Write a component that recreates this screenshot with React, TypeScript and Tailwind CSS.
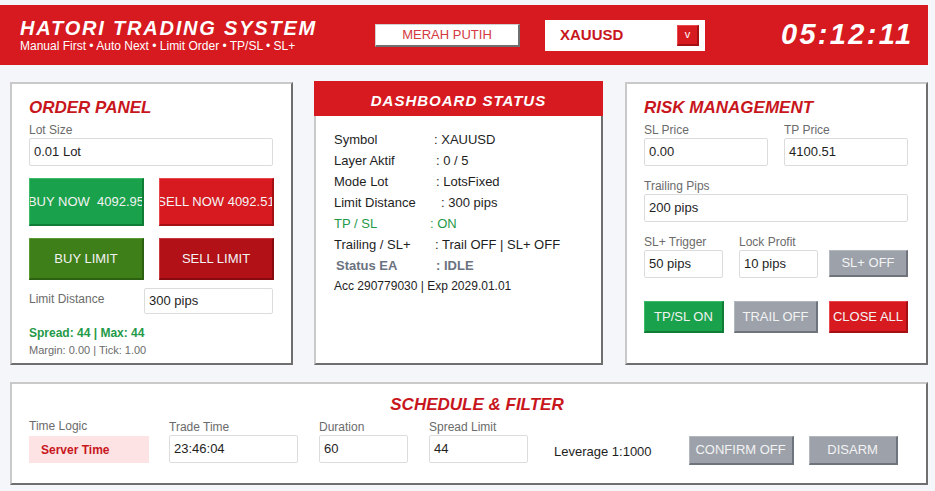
const FONT = { fontFamily: '"Liberation Sans", Arial, sans-serif' };

const panelCls =
  "border-2 border-t-[#c9c9c9] border-l-[#c9c9c9] border-r-[#6f6f6f] border-b-[#6f6f6f] bg-white";

function Field({ label, value, w }: { label: string; value: string; w: string }) {
  return (
    <div className={`flex flex-col ${w}`}>
      <span className="h-[14px] text-[12px] leading-[14px] text-[#6b6b6b]">{label}</span>
      <Input value={value} className="mt-px h-[28px] w-full" />
    </div>
  );
}

function Input({ value, className }: { value: string; className: string }) {
  return (
    <div
      className={`flex items-center rounded-[2px] border border-[#dcdcdc] bg-white pl-[4px] text-[13px] text-[#1e1e1e] ${className}`}
    >
      {value}
    </div>
  );
}

type Tone = "green" | "red" | "darkgreen" | "darkred" | "gray";

const tones: Record<Tone, string> = {
  green: "bg-[#19a24b] border-t-[#3dbb6a] border-l-[#3dbb6a] border-r-[#0f7d36] border-b-[#0f7d36] text-[#f2f2f2]",
  red: "bg-[#d71920] border-t-[#e8474d] border-l-[#e8474d] border-r-[#a51015] border-b-[#a51015] text-[#f4f4f4]",
  darkgreen: "bg-[#3f7f1a] border-t-[#5c9a35] border-l-[#5c9a35] border-r-[#2b6110] border-b-[#2b6110] text-[#f2f2f2]",
  darkred: "bg-[#b11117] border-t-[#c93a3f] border-l-[#c93a3f] border-r-[#870a0e] border-b-[#870a0e] text-[#f4f4f4]",
  gray: "bg-[#9ca1aa] border-t-[#b3b7be] border-l-[#b3b7be] border-r-[#6f747c] border-b-[#6f747c] text-[#f3f3f3]",
};

function Btn({ label, tone, className }: { label: string; tone: Tone; className: string }) {
  return (
    <button
      type="button"
      className={`flex items-center justify-center overflow-hidden whitespace-pre border-2 border-t-[1px] border-l-[1px] text-[13px] ${tones[tone]} ${className}`}
    >
      {label}
    </button>
  );
}

function Title({ children, className = "" }: { children: string; className?: string }) {
  return (
    <h2 className={`h-[20px] text-[17px] font-bold italic leading-[23px] text-[#c8161d] ${className}`}>{children}</h2>
  );
}

function OrderPanel() {
  return (
    <section className={`h-[283px] w-[283px] px-[17px] pt-[12px] ${panelCls}`}>
      <Title>ORDER PANEL</Title>
      <div className="mt-[7px] h-[14px] text-[12px] leading-[14px] text-[#6b6b6b]">Lot Size</div>
      <Input value="0.01 Lot" className="mt-px h-[28px] w-[244px]" />
      <div className="mt-[12px] flex gap-[15px]">
        <Btn label="BUY NOW  4092.95" tone="green" className="h-[48px] w-[115px]" />
        <Btn label="SELL NOW 4092.51" tone="red" className="h-[48px] w-[115px]" />
      </div>
      <div className="mt-[12px] flex gap-[15px]">
        <Btn label="BUY LIMIT" tone="darkgreen" className="h-[42px] w-[115px]" />
        <Btn label="SELL LIMIT" tone="darkred" className="h-[42px] w-[115px]" />
      </div>
      <div className="mt-[8px] flex">
        <span className="w-[115px] pt-[4px] text-[12px] leading-[14px] text-[#6b6b6b]">Limit Distance</span>
        <Input value="300 pips" className="h-[26px] w-[129px]" />
      </div>
      <div className="mt-[12px] h-[14px] text-[12px] font-bold leading-[14px] text-[#1f9a48]">Spread: 44 | Max: 44</div>
      <div className="mt-[4px] h-[13px] text-[11px] leading-[13px] text-[#6b6b6b]">Margin: 0.00 | Tick: 1.00</div>
    </section>
  );
}

const statusRows = [
  { k: "Symbol", v: "XAUUSD", w: "w-[100px]", c: "text-[#1e1e1e]" },
  { k: "Layer Aktif", v: "0 / 5", w: "w-[102px]", c: "text-[#1e1e1e]" },
  { k: "Mode Lot", v: "LotsFixed", w: "w-[102px]", c: "text-[#1e1e1e]" },
  { k: "Limit Distance", v: "300 pips", w: "w-[107px]", c: "text-[#1e1e1e]" },
  { k: "TP / SL", v: "ON", w: "w-[96px]", c: "text-[#1f9a48]" },
  { k: "Trailing / SL+", v: "Trail OFF | SL+ OFF", w: "w-[101px]", c: "text-[#1e1e1e]" },
];

function DashboardPanel() {
  return (
    <section className="flex h-[284px] w-[289px] -mt-px flex-col border-2 border-t-0 border-l-[#c9c9c9] border-r-[#6f6f6f] border-b-[#6f6f6f] bg-white">
      <div className="-mx-[2px] flex h-[35px] items-center justify-center bg-[#d71920] pt-[5px] text-[15px] font-bold italic tracking-[1px] text-white">
        DASHBOARD STATUS
      </div>
      <div className="pl-[18px] pt-[13px] text-[13px] leading-[21px]">
        {statusRows.map((r) => (
          <div key={r.k} className={`flex ${r.c}`}>
            <span className={r.w}>{r.k}</span>
            <span>: {r.v}</span>
          </div>
        ))}
        <div className="flex font-bold text-[#6b7280]">
          <span className="w-[102px] pl-[2px]">Status EA</span>
          <span>: IDLE</span>
        </div>
        <div className="text-[12px] text-[#1e1e1e]">Acc 290779030 | Exp 2029.01.01</div>
      </div>
    </section>
  );
}

function RiskPanel() {
  return (
    <section className={`h-[283px] w-[303px] px-[17px] pt-[12px] ${panelCls}`}>
      <Title>RISK MANAGEMENT</Title>
      <div className="mt-[7px] flex gap-[16px]">
        <Field label="SL Price" value="0.00" w="w-[124px]" />
        <Field label="TP Price" value="4100.51" w="w-[124px]" />
      </div>
      <div className="mt-[13px]">
        <Field label="Trailing Pips" value="200 pips" w="w-[264px]" />
      </div>
      <div className="mt-[13px] flex items-end">
        <Field label="SL+ Trigger" value="50 pips" w="w-[79px]" />
        <div className="ml-[16px]">
          <Field label="Lock Profit" value="10 pips" w="w-[79px]" />
        </div>
        <Btn label="SL+ OFF" tone="gray" className="mb-px ml-[11px] h-[27px] w-[79px]" />
      </div>
      <div className="mt-[23px] flex">
        <Btn label="TP/SL ON" tone="green" className="h-[32px] w-[80px]" />
        <Btn label="TRAIL OFF" tone="gray" className="ml-[10px] h-[32px] w-[84px]" />
        <Btn label="CLOSE ALL" tone="red" className="ml-[11px] h-[32px] w-[79px]" />
      </div>
    </section>
  );
}

function SchedulePanel() {
  return (
    <section className={`mt-[17px] ml-[10px] h-[103px] w-[918px] px-[17px] pt-[9px] ${panelCls}`}>
      <Title className="pl-[16px] text-center">SCHEDULE &amp; FILTER</Title>
      <div className="mt-[6px] flex items-end">
        <div className="flex w-[120px] flex-col">
          <span className="h-[14px] text-[12px] leading-[14px] text-[#6b6b6b]">Time Logic</span>
          <div className="mt-[3px] flex h-[27px] items-center bg-[#fde3e4] pl-[12px] text-[12px] font-bold text-[#c8161d]">
            Server Time
          </div>
        </div>
        <div className="ml-[20px]">
          <Field label="Trade Time" value="23:46:04" w="w-[129px]" />
        </div>
        <div className="ml-[21px]">
          <Field label="Duration" value="60" w="w-[89px]" />
        </div>
        <div className="ml-[21px]">
          <Field label="Spread Limit" value="44" w="w-[99px]" />
        </div>
        <span className="mb-[2px] ml-[26px] text-[13px] text-[#1e1e1e]">Leverage 1:1000</span>
        <Btn label="CONFIRM OFF" tone="gray" className="-mb-[2px] ml-[37px] h-[29px] w-[105px]" />
        <Btn label="DISARM" tone="gray" className="-mb-[2px] ml-[15px] h-[29px] w-[89px]" />
      </div>
    </section>
  );
}

export default function App() {
  return (
    <div className="h-[491px] w-[935px] overflow-hidden bg-[#f5f6f9] pt-[5px]" style={FONT}>
      <header className="flex h-[60px] w-[928px] items-center bg-[#d71920] pl-[20px] text-white">
        <div className="flex w-[355px] flex-col">
          <h1 className="text-[20px] font-bold italic leading-[22px] tracking-[1.8px]">HATORI TRADING SYSTEM</h1>
          <p className="text-[12px] leading-[14px]">Manual First • Auto Next • Limit Order • TP/SL • SL+</p>
        </div>
        <div className="flex h-[23px] w-[145px] items-center justify-center border-2 border-t-[1px] border-l-[1px] border-t-[#d0d0d0] border-l-[#d0d0d0] border-r-[#6f6f6f] border-b-[#6f6f6f] bg-white text-[13px] text-[#d33a40]">
          MERAH PUTIH
        </div>
        <div className="ml-[25px] flex h-[31px] w-[160px] items-center justify-between bg-white pl-[15px] pr-[6px]">
          <span className="text-[15px] font-bold text-[#c8161d]">XAUUSD</span>
          <span className="flex h-[21px] w-[22px] items-center justify-center border-2 border-t-[1px] border-l-[1px] border-t-[#e8474d] border-l-[#e8474d] border-r-[#a51015] border-b-[#a51015] bg-[#d71920] text-[11px] text-white">
            v
          </span>
        </div>
        <div className="ml-[76px] text-[29px] font-bold italic tracking-[2.3px]">05:12:11</div>
      </header>
      <div className="mt-[17px] flex pl-[10px]">
        <OrderPanel />
        <div className="ml-[21px]">
          <DashboardPanel />
        </div>
        <div className="ml-[22px]">
          <RiskPanel />
        </div>
      </div>
      <SchedulePanel />
    </div>
  );
}
